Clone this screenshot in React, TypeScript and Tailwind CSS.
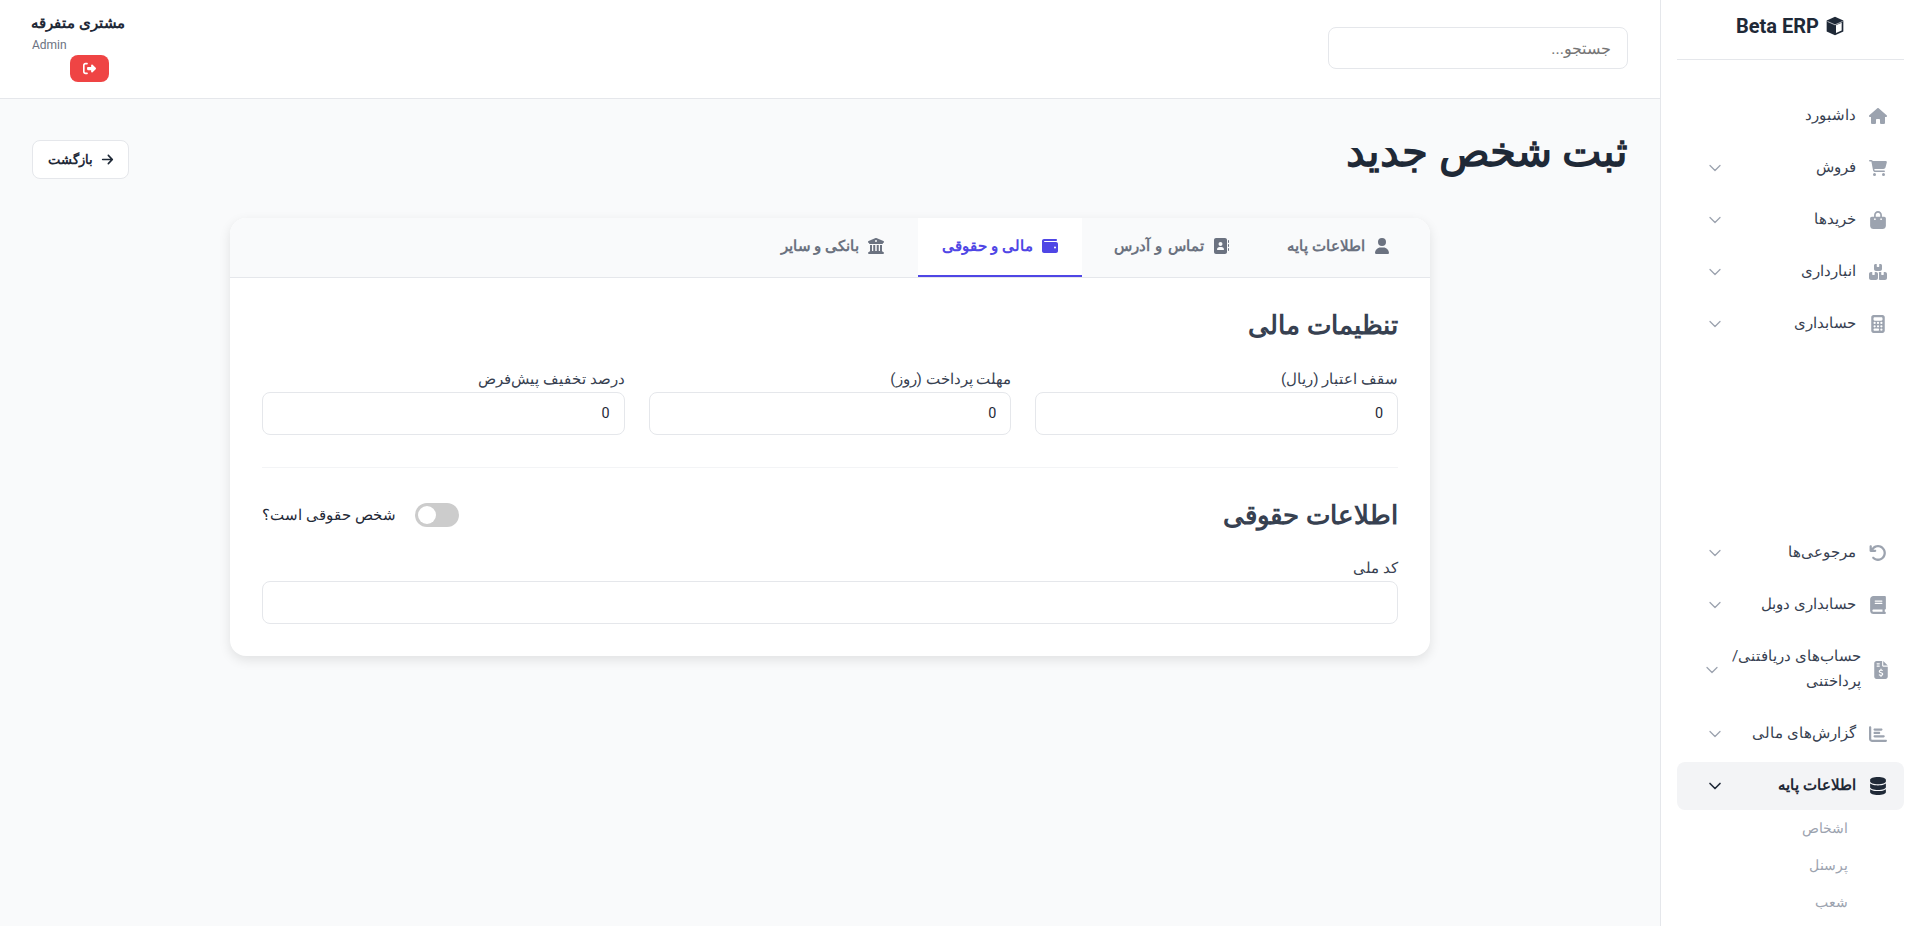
import type { ReactNode } from "react";
import { ChevronDown } from "lucide-react";
import {
  FaHouse,
  FaCartShopping,
  FaBagShopping,
  FaBoxesStacked,
  FaCalculator,
  FaArrowRotateLeft,
  FaBook,
  FaFileInvoiceDollar,
  FaChartBar,
  FaDatabase,
  FaUser,
  FaAddressBook,
  FaWallet,
  FaBuildingColumns,
  FaRightFromBracket,
  FaArrowRight,
} from "react-icons/fa6";

function NavItem({ icon, label, chevron = true }: { icon: ReactNode; label: string; chevron?: boolean }) {
  return (
    <div className="flex h-12 items-center rounded-lg pl-4 pr-[17px] text-[15.2px] text-[#374151]">
      <span className="flex w-[18px] shrink-0 justify-center text-[18px] text-[#9ca3af]">{icon}</span>
      <span className="mr-[13px] flex-1 -translate-y-px leading-6">{label}</span>
      {chevron && <ChevronDown size={20} strokeWidth={1.5} className="ml-3 text-[#9ca3af]" />}
    </div>
  );
}

function Field({ label, value }: { label: string; value?: string }) {
  return (
    <div>
      <label className="mb-[2px] block text-[15.2px] leading-[22px] text-[#374151]">{label}</label>
      <input
        readOnly
        value={value ?? ""}
        className="block h-[43px] w-full rounded-lg border border-[#e5e7eb] bg-white px-[14px] text-right text-[14.4px] text-[#1f2937] outline-none"
      />
    </div>
  );
}

function Tab({ icon, label, active, spaced }: { icon: ReactNode; label: string; active?: boolean; spaced?: boolean }) {
  return (
    <div
      className={
        active
          ? "flex h-[59px] items-center gap-[7px] border-b-2 border-[#4f46e5] bg-white pb-[2px] pl-6 pr-[22px] text-[15.2px] font-semibold text-[#4f46e5]"
          : "flex h-[59px] items-center gap-[7px] px-6 pb-[4px] text-[15.2px] font-semibold text-[#6b7280]"
      }
    >
      <span className="flex w-5 justify-center text-[16px]">{icon}</span>
      <span className={spaced ? "leading-6 [word-spacing:2px]" : "leading-6"}>{label}</span>
    </div>
  );
}

export default function App() {
  return (
    <div dir="rtl" className="flex h-screen overflow-hidden bg-[#f9fafb] font-['Roboto',sans-serif] text-[#1f2937]">
      {/* Sidebar */}
      <aside className="w-64 shrink-0 border-l border-[#e5e7eb] bg-white pl-4 pr-3">
        <div className="flex h-[60px] items-center justify-center gap-[6px] border-b border-[#e5e7eb] pb-2 text-[20px] font-bold text-[#1f2937]">
          <svg viewBox="0 0 24 24" className="h-5 w-5">
            <path d="M12 1 22 5.5V18.5L12 23 2 18.5V5.5Z" fill="#1f2937" />
            <path d="M13.2 11 20 8V17.4L13.2 20.4Z" fill="#ffffff" />
            <path d="M3 6.6 12 10.6 21 6.6" fill="none" stroke="#ffffff" strokeWidth="0.8" />
          </svg>
          <span dir="ltr">Beta ERP</span>
        </div>
        <nav className="mt-8 flex flex-col gap-1">
          <NavItem icon={<FaHouse />} label="داشبورد" chevron={false} />
          <NavItem icon={<FaCartShopping />} label="فروش" />
          <NavItem icon={<FaBagShopping />} label="خریدها" />
          <NavItem icon={<FaBoxesStacked />} label="انبارداری" />
          <NavItem icon={<FaCalculator />} label="حسابداری" />
          <div className="h-[173px]" />
          <NavItem icon={<FaArrowRotateLeft />} label="مرجوعی‌ها" />
          <NavItem icon={<FaBook />} label="حسابداری دوبل" />
          <div className="-ml-[3px] -mr-[3px] flex h-[73px] items-center rounded-lg pl-4 pr-[17px] text-[15.2px] text-[#374151]">
            <span className="flex w-[18px] shrink-0 justify-center text-[18px] text-[#9ca3af]">
              <FaFileInvoiceDollar />
            </span>
            <span className="mr-[11px] flex-1 -translate-y-px leading-[25px]">حساب‌های دریافتنی/پرداختنی</span>
            <ChevronDown size={20} strokeWidth={1.5} className="ml-3 text-[#9ca3af]" />
          </div>
          <NavItem icon={<FaChartBar />} label="گزارش‌های مالی" />
          <div className="flex h-12 items-center rounded-lg bg-[#f3f4f6] pl-4 pr-[17px] text-[15.2px] font-semibold text-[#1f2937]">
            <span className="flex w-[18px] shrink-0 justify-center text-[18px]">
              <FaDatabase />
            </span>
            <span className="mr-[13px] flex-1 -translate-y-px leading-6">اطلاعات پایه</span>
            <ChevronDown size={20} strokeWidth={2} className="ml-3" />
          </div>
          <div className="-mt-1 flex flex-col pr-14 text-[13.6px] leading-[37px] text-[#9ca3af]">
            <span>اشخاص</span>
            <span>پرسنل</span>
            <span>شعب</span>
          </div>
        </nav>
      </aside>

      {/* Main */}
      <div className="flex min-w-0 flex-1 flex-col">
        <header className="flex h-[99px] shrink-0 justify-between border-b border-[#e5e7eb] bg-white px-8">
          <div className="pt-[27px]">
            <input
              placeholder="جستجو..."
              className="h-[42px] w-[300px] rounded-lg border border-[#e5e7eb] bg-white px-4 text-[16px] outline-none placeholder:text-[#757575]"
            />
          </div>
          <div className="flex w-[93px] flex-col pt-[11px]">
            <div className="whitespace-nowrap text-[15px] font-semibold leading-6 text-[#1f2937]">مشتری متفرقه</div>
            <div dir="ltr" className="text-left text-[12px] leading-[20px] text-[#6b7280]">
              Admin
            </div>
            <button className="mr-4 flex h-[27px] w-[39px] items-center justify-center rounded-lg bg-[#ef4444] text-[13px] text-white">
              <FaRightFromBracket />
            </button>
          </div>
        </header>

        <main className="flex-1 px-8 pt-[41px]">
          <div className="flex items-start justify-between">
            <h1 className="text-[41.6px] font-semibold leading-[24px] text-[#1f2937]">ثبت شخص جدید</h1>
            <button className="flex h-[39px] w-[97px] items-center justify-center gap-2 rounded-lg border border-[#e5e7eb] bg-white text-[13px] font-semibold text-[#1f2937]">
              <FaArrowRight className="text-[13px]" />
              <span>بازگشت</span>
            </button>
          </div>

          <div className="mx-auto mt-[39px] w-[1200px] rounded-2xl bg-white shadow-[0_4px_12px_rgba(0,0,0,0.1)]">
            <div className="flex gap-2 rounded-t-2xl border-b border-[#e5e7eb] bg-[#f9fafb] px-[14px]">
              <Tab icon={<FaUser />} label="اطلاعات پایه" />
              <Tab icon={<FaAddressBook />} label="تماس و آدرس" spaced />
              <Tab icon={<FaWallet />} label="مالی و حقوقی" active />
              <Tab icon={<FaBuildingColumns />} label="بانکی و سایر" />
            </div>

            <div className="px-8 pb-8 pt-[27px]">
              <h2 className="text-[26.4px] font-semibold leading-[40px] text-[#374151]">تنظیمات مالی</h2>
              <div className="mt-[23px] grid grid-cols-3 gap-6">
                <Field label="سقف اعتبار (ریال)" value="0" />
                <Field label="مهلت پرداخت (روز)" value="0" />
                <Field label="درصد تخفیف پیش‌فرض" value="0" />
              </div>
              <hr className="mt-[32px] border-[#f3f4f6]" />
              <div className="mt-[27px] flex items-center justify-between">
                <h2 className="text-[26.4px] font-semibold leading-[40px] text-[#374151]">اطلاعات حقوقی</h2>
                <div className="flex items-center gap-[19px]">
                  <div className="relative h-6 w-11 rounded-full bg-[#cccccc]">
                    <span className="absolute left-[3px] top-[3px] h-[18px] w-[18px] rounded-full bg-white" />
                  </div>
                  <span className="text-[15.2px] font-medium text-[#1f2937]">شخص حقوقی است؟</span>
                </div>
              </div>
              <div className="mt-[22px]">
                <Field label="کد ملی" />
              </div>
            </div>
          </div>
        </main>
      </div>
    </div>
  );
}
